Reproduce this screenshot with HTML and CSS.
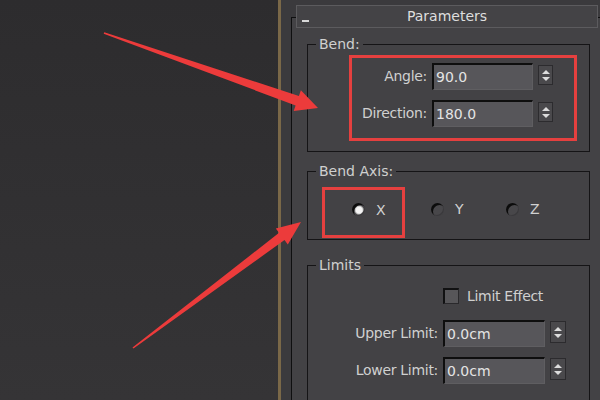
FILE: index.html
```html
<!DOCTYPE html>
<html>
<head>
<meta charset="utf-8">
<title>Bend Parameters</title>
<link rel="stylesheet" href="styles.css">
</head>
<body>
<div class="viewport"></div>
<div class="panel">
  <div class="rollout">
    <div class="rollout-header">
      <span class="collapse"></span>
      <span class="title">Parameters</span>
    </div>

    <div class="group group-bend">
      <div class="legend">Bend:</div>
      <div class="highlight bend-fields">
        <div class="field-row">
          <span class="field-label">Angle:</span>
          <span class="input">90.0</span>
          <span class="spinner"><span class="tri-up"></span><span class="tri-down"></span></span>
        </div>
        <div class="field-row">
          <span class="field-label">Direction:</span>
          <span class="input">180.0</span>
          <span class="spinner"><span class="tri-up"></span><span class="tri-down"></span></span>
        </div>
      </div>
    </div>

    <div class="group group-axis">
      <div class="legend">Bend Axis:</div>
      <div class="axis-row">
        <div class="highlight axis-x">
          <span class="radio checked"></span><span class="radio-label">X</span>
        </div>
        <div class="axis-item axis-y">
          <span class="radio"></span><span class="radio-label">Y</span>
        </div>
        <div class="axis-item">
          <span class="radio"></span><span class="radio-label">Z</span>
        </div>
      </div>
    </div>

    <div class="group group-limits">
      <div class="legend">Limits</div>
      <div class="check-row">
        <span class="checkbox"></span><span class="check-label">Limit Effect</span>
      </div>
      <div class="limit-row">
        <span class="field-label">Upper Limit:</span>
        <span class="input">0.0cm</span>
        <span class="spinner"><span class="tri-up"></span><span class="tri-down"></span></span>
      </div>
      <div class="limit-row">
        <span class="field-label">Lower Limit:</span>
        <span class="input">0.0cm</span>
        <span class="spinner"><span class="tri-up"></span><span class="tri-down"></span></span>
      </div>
    </div>
  </div>
</div>

<svg class="annotations" width="600" height="400" viewBox="0 0 600 400">
  <polygon class="arrow" points="104.3,32.2 298.9,96 300.9,90.3 318,108 293.7,111.1 295.6,105.4 103.7,33.8"/>
  <polygon class="arrow" points="132.5,347.4 279.1,232.8 275.8,228.4 301,222 287.8,244.4 284.5,240 133.5,348.6"/>
</svg>
</body>
</html>
```

FILE: styles.css
```css
html, body {
  margin: 0;
  padding: 0;
}

body {
  width: 600px;
  height: 400px;
  overflow: hidden;
  display: flex;
  position: relative;
  font-family: "DejaVu Sans", "Noto Sans", sans-serif;
  font-size: 14px;
  color: #d0d0d0;
  background: #2f2e30;
}

.viewport {
  flex: none;
  width: 278px;
  height: 400px;
  background: linear-gradient(#2d2c2e, #353436);
}

.panel {
  flex: 1;
  height: 400px;
  border-left: 3px solid #7a6848;
  background: #3b3a3d;
  padding-left: 10px;
  overflow: hidden;
}

.rollout {
  margin-top: 17px;
  height: 400px;
  border-left: 1px solid #0f0f10;
  border-top: 1px solid #0f0f10;
  background: #434245;
}

.rollout-header {
  margin: -13px 2px 0 4px;
  height: 21px;
  border: 1px solid #5c5b5e;
  background: #444346;
  display: grid;
  grid-template-columns: 20px 1fr 20px;
  align-items: center;
}

.collapse {
  align-self: end;
  margin: 0 0 5px 5px;
  width: 7px;
  height: 2px;
  background: #d8d8d8;
}

.title {
  text-align: center;
  color: #dedede;
  line-height: 21px;
}

.group {
  margin-left: 15px;
  margin-right: 10px;
  border: 1px solid #151416;
}

.legend {
  width: fit-content;
  margin: -9px 0 0 8px;
  padding: 0 3px;
  height: 16px;
  line-height: 16px;
  background: #434245;
}

.highlight {
  border: 3px solid #e5403f;
}

/* Bend group */
.group-bend {
  margin-top: 16px;
  padding-bottom: 10px;
}

.bend-fields {
  margin: 3px 0 0 41px;
  width: 222px;
  padding: 5px 0 11px;
  display: flex;
  flex-direction: column;
  gap: 10px;
}

.field-row {
  display: grid;
  grid-template-columns: 75px 101px 15px;
  column-gap: 5px;
  align-items: start;
}

.field-label {
  text-align: right;
  line-height: 27px;
  white-space: nowrap;
  letter-spacing: -0.3px;
}

.input {
  box-sizing: border-box;
  height: 27px;
  line-height: 24px;
  padding-left: 2px;
  border-top: 2px solid #0e0e0e;
  border-left: 2px solid #0e0e0e;
  border-right: 1px solid #5f5e61;
  border-bottom: 1px solid #5f5e61;
  background: #57565a;
  color: #e4e4e4;
}

.spinner {
  box-sizing: border-box;
  margin-top: 2px;
  height: 20px;
  border: 1px solid #2c2b2e;
  background: #4a494c;
  display: flex;
  flex-direction: column;
  align-items: center;
  justify-content: center;
  gap: 3px;
}

.tri-up,
.tri-down {
  width: 0;
  height: 0;
  border-left: 4px solid transparent;
  border-right: 4px solid transparent;
}

.tri-up {
  border-bottom: 4px solid #dcdcdc;
}

.tri-down {
  border-top: 4px solid #dcdcdc;
}

/* Bend Axis group */
.group-axis {
  margin-top: 19px;
  padding-bottom: 1px;
}

.axis-row {
  display: flex;
  align-items: flex-start;
  margin-top: 8px;
}

.axis-x {
  box-sizing: border-box;
  margin-left: 14px;
  width: 83px;
  height: 51px;
  padding: 0 0 6px 27px;
  display: flex;
  align-items: center;
}

.axis-item {
  display: flex;
  align-items: center;
  margin-top: 13px;
  height: 18px;
}

.axis-y {
  margin-left: 26px;
  width: 75px;
}

.radio {
  flex: none;
  width: 13px;
  height: 13px;
  border-radius: 50%;
  background: #48474a;
  box-shadow: inset 2px 2px 0 #0c0c0c, inset -1px -1px 0 #3a393c;
}

.radio.checked {
  background: radial-gradient(circle at 55% 55%, #f4f4f4 0 3px, #bdbdbd 4px, #4d4c4f 5px);
}

.radio-label {
  margin-left: 11px;
  line-height: 18px;
}

/* Limits group */
.group-limits {
  margin-top: 25px;
  height: 200px;
}

.check-row {
  display: flex;
  align-items: center;
  margin: 14px 0 0 135px;
  height: 18px;
}

.checkbox {
  box-sizing: border-box;
  width: 16px;
  height: 16px;
  border-top: 2px solid #111112;
  border-left: 2px solid #111112;
  border-right: 1px solid #2a292c;
  border-bottom: 1px solid #2a292c;
  background: #575659;
}

.check-label {
  margin-left: 8px;
  letter-spacing: -0.3px;
}

.limit-row {
  display: grid;
  grid-template-columns: 130px 102px 16px;
  column-gap: 5px;
  align-items: start;
  margin-top: 15px;
}

.limit-row + .limit-row {
  margin-top: 10px;
}

.limit-row .spinner {
  margin-top: 1px;
  height: 22px;
}

/* Annotation overlay */
.annotations {
  position: absolute;
  left: 0;
  top: 0;
  pointer-events: none;
}

.arrow {
  fill: #ec3b3b;
}
```
